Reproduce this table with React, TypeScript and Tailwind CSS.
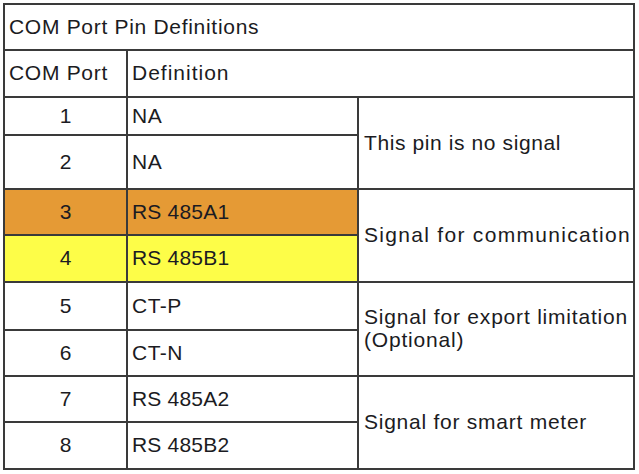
import React from "react";

const font = { fontFamily: '"Liberation Sans", Arial, sans-serif' };

export default function App() {
  return (
    <div className="w-[639px] h-[474px] bg-white pl-[3px] pt-[3px]" style={font}>
      <div
        className="grid bg-[#3a3a3a] gap-[2px] p-[2px] w-[632px] text-[21px] text-[#1b1b22] leading-none [&>div]:pb-[2px]"
        style={{
          gridTemplateColumns: "121px 229px 274px",
          gridTemplateRows: "44px 45px 36px 52px 44px 45px 46px 44px 44px 45px",
        }}
      >
        <div className="col-span-3 bg-white flex items-center pl-[4px] tracking-[0.7px]">COM Port Pin Definitions</div>
        <div className="bg-white flex items-center pl-[4px] tracking-[0.7px]">COM Port</div>
        <div className="col-span-2 bg-white flex items-center pl-[4px] tracking-[1px]">Definition</div>

        <div className="bg-white flex items-center justify-center">1</div>
        <div className="bg-white flex items-center pl-[4px] tracking-[0.5px]">NA</div>
        <div className="row-span-2 bg-white flex items-center pl-[5px] tracking-[0.6px]">This pin is no signal</div>
        <div className="bg-white flex items-center justify-center">2</div>
        <div className="bg-white flex items-center pl-[4px] tracking-[0.5px]">NA</div>

        <div className="bg-[#e59a35] flex items-center justify-center">3</div>
        <div className="bg-[#e59a35] flex items-center pl-[4px] tracking-[0.2px]">RS 485A1</div>
        <div className="row-span-2 bg-white flex items-center pl-[5px] tracking-[1.3px]">Signal for communication</div>
        <div className="bg-[#fdfd48] flex items-center justify-center">4</div>
        <div className="bg-[#fdfd48] flex items-center pl-[4px] tracking-[0.2px]">RS 485B1</div>

        <div className="bg-white flex items-center justify-center">5</div>
        <div className="bg-white flex items-center pl-[4px] tracking-[0.5px]">CT-P</div>
        <div className="row-span-2 bg-white flex flex-col justify-center pl-[5px] tracking-[0.8px] gap-[2px]">
          <span>Signal for export limitation</span>
          <span>(Optional)</span>
        </div>
        <div className="bg-white flex items-center justify-center">6</div>
        <div className="bg-white flex items-center pl-[4px] tracking-[0.5px]">CT-N</div>

        <div className="bg-white flex items-center justify-center">7</div>
        <div className="bg-white flex items-center pl-[4px] tracking-[0.2px]">RS 485A2</div>
        <div className="row-span-2 bg-white flex items-center pl-[5px] tracking-[0.75px]">Signal for smart meter</div>
        <div className="bg-white flex items-center justify-center">8</div>
        <div className="bg-white flex items-center pl-[4px] tracking-[0.2px]">RS 485B2</div>
      </div>
    </div>
  );
}
